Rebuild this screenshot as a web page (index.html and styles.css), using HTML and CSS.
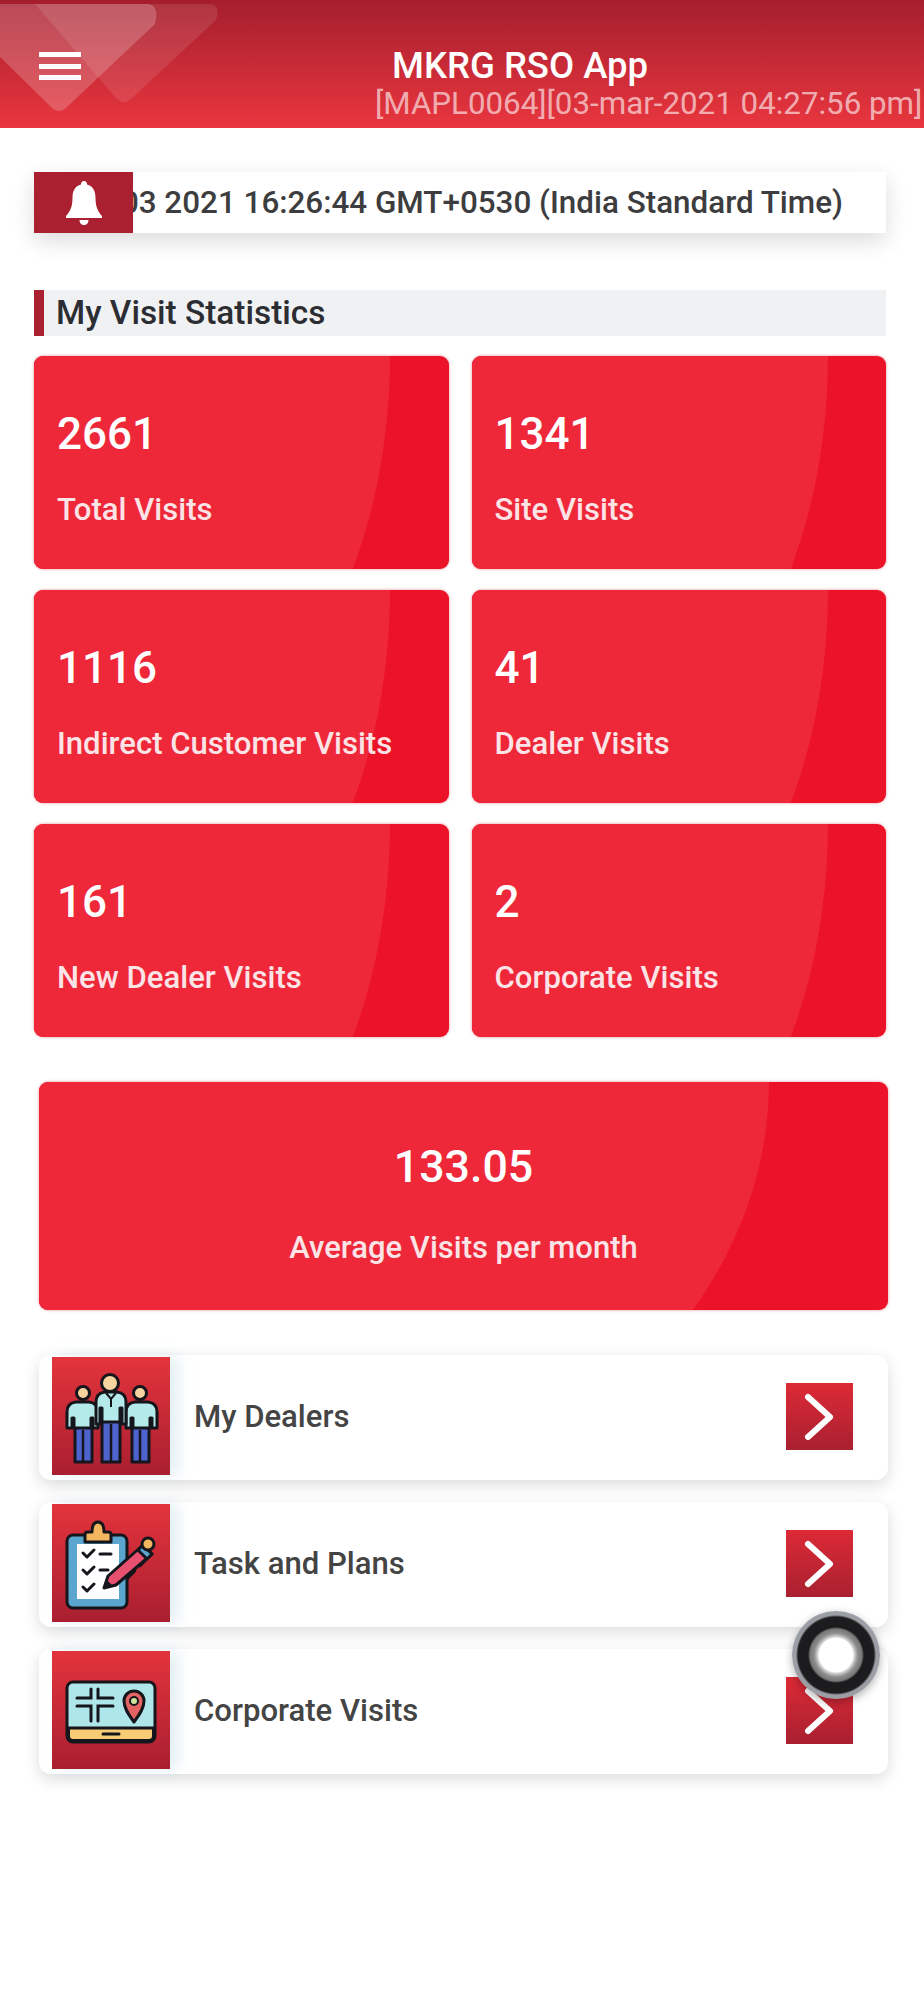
FILE: index.html
```html
<!DOCTYPE html>
<html lang="en">
<head>
  <meta charset="UTF-8">
  <meta name="viewport" content="width=device-width, initial-scale=1.0">
  <title>MKRG RSO App</title>
  <link rel="stylesheet" href="styles.css">
</head>
<body>
  <header class="topbar">
    <svg class="topbar-deco" viewBox="0 0 230 128" aria-hidden="true">
      <path d="M0 4H146Q160 4 155 24L68 106Q59 116 50 106L0 57Z" fill="#fff" fill-opacity="0.2"/>
      <path d="M35 4H208Q222 4 216 20L132 98Q124 106 116 98Z" fill="#fff" fill-opacity="0.1"/>
    </svg>
    <div class="menu-btn"><span></span><span></span><span></span></div>
    <div class="topbar-title">
      <h1>MKRG RSO App</h1>
      <p>[MAPL0064][03-mar-2021 04:27:56 pm]</p>
    </div>
  </header>

  <main class="container">
    <div class="notice">
      <div class="notice-bell">
        <svg viewBox="0 0 40 44" width="40" height="44" aria-hidden="true">
          <path d="M20 0c2 0 3 1.500 3 3.500 6 1.500 8.500 6.500 8.500 13 0 9 2 13.500 6.500 18.500v2H2v-2c4.500-5 6.500-9.500 6.500-18.500 0-6.500 2.500-11.500 8.500-13C17 1.500 18 0 20 0z" fill="#fff"/>
          <path d="M15.500 39h9c0 3-2 5-4.500 5s-4.500-2-4.500-5z" fill="#fff"/>
        </svg>
      </div>
      <div class="notice-text"><span>03 2021 16:26:44 GMT+0530 (India Standard Time)</span></div>
    </div>

    <h2 class="section-title">My Visit Statistics</h2>

    <div class="stats">
      <div class="stat"><b>2661</b><span>Total Visits</span></div>
      <div class="stat"><b>1341</b><span>Site Visits</span></div>
      <div class="stat"><b>1116</b><span>Indirect Customer Visits</span></div>
      <div class="stat"><b>41</b><span>Dealer Visits</span></div>
      <div class="stat"><b>161</b><span>New Dealer Visits</span></div>
      <div class="stat"><b>2</b><span>Corporate Visits</span></div>
    </div>

    <div class="stat stat-wide"><b>133.05</b><span>Average Visits per month</span></div>

    <div class="links">
      <div class="link-row">
        <div class="link-icon">
          <svg viewBox="0 0 118 118" width="118" height="118" aria-hidden="true">
            <g transform="translate(0 5)">
              <g stroke="#15151c" stroke-width="3" stroke-linejoin="round">
                <path d="M23 64h17v36h-17z" fill="#4f63cf"/>
                <path d="M80 64h17v36h-17z" fill="#4f63cf"/>
                <path d="M15 66V50q0-9 9-10h13q9 1 9 10v16h-5V56h-2v10H22V56h-2v10z" fill="#b5eaea"/>
                <path d="M74 66V50q0-9 9-10h13q9 1 9 10v16h-5V56h-2v10H81V56h-2v10z" fill="#b5eaea"/>
                <circle cx="31" cy="31" r="6.500" fill="#f7d3a0"/>
                <circle cx="88" cy="31" r="6.500" fill="#f7d3a0"/>
                <path d="M50 58h18v42h-18z" fill="#4f63cf"/>
                <path d="M44 62V40q0-9 9-10h12q9 1 9 10v22h-4V46h-2v14H50V46h-2v16z" fill="#b5eaea"/>
                <circle cx="58" cy="21" r="8.500" fill="#f7d3a0"/>
              </g>
              <path d="M59 62v38M31 68v31M88 68v31" stroke="#15151c" stroke-width="2.500"/>
              <path d="M54 31l5 6 5-6M59 37v8" stroke="#15151c" stroke-width="2" fill="none"/>
            </g>
          </svg>
        </div>
        <span class="link-label">My Dealers</span>
        <div class="link-go"><svg viewBox="0 0 67 67" width="67" height="67" aria-hidden="true"><path d="M22 14l22 20-22 20" fill="none" stroke="#fff" stroke-width="6" stroke-linecap="round" stroke-linejoin="round"/></svg></div>
      </div>

      <div class="link-row">
        <div class="link-icon">
          <svg viewBox="0 0 118 118" width="118" height="118" aria-hidden="true">
            <rect x="15" y="31" width="60" height="73" rx="6" fill="#5aa6cf" stroke="#15151c" stroke-width="3"/>
            <rect x="25" y="40" width="42" height="55" fill="#fff"/>
            <path d="M33 38v-8q0-2 3-2h4q0-10 6-10t6 10h4q3 0 3 2v8z" fill="#f3b65f" stroke="#15151c" stroke-width="3" stroke-linejoin="round"/>
            <path d="M31 49l4 4 7-7M31 66l4 4 7-7M31 83l4 4 7-7" fill="none" stroke="#15151c" stroke-width="3" stroke-linecap="round" stroke-linejoin="round"/>
            <path d="M48 50h11M48 66h8" stroke="#15151c" stroke-width="3" stroke-linecap="round"/>
            <path d="M52 84l4-12 35-31 9 9-36 31z" fill="#e8506f" stroke="#15151c" stroke-width="3" stroke-linejoin="round"/>
            <path d="M86 46l5-5 9 9-5 5z" fill="#5aa6cf" stroke="#15151c" stroke-width="3" stroke-linejoin="round"/>
            <circle cx="96" cy="40" r="6" fill="#f3b65f" stroke="#15151c" stroke-width="3"/>
            <path d="M52 84l3-8 5 5z" fill="#15151c"/>
            <path d="M88 62l6-6M75 75l8-8" stroke="#15151c" stroke-width="2.500" stroke-linecap="round"/>
          </svg>
        </div>
        <span class="link-label">Task and Plans</span>
        <div class="link-go"><svg viewBox="0 0 67 67" width="67" height="67" aria-hidden="true"><path d="M22 14l22 20-22 20" fill="none" stroke="#fff" stroke-width="6" stroke-linecap="round" stroke-linejoin="round"/></svg></div>
      </div>

      <div class="link-row">
        <div class="link-icon">
          <svg viewBox="0 0 118 118" width="118" height="118" aria-hidden="true">
            <rect x="15" y="31" width="88" height="60" rx="6" fill="#aee6ea" stroke="#15151c" stroke-width="3"/>
            <path d="M16.500 77h85v8q0 4.500-4.500 4.500H21q-4.500 0-4.500-4.500z" fill="#f8cb75" stroke="#15151c" stroke-width="3"/>
            <path d="M51 83h16" stroke="#15151c" stroke-width="3" stroke-linecap="round"/>
            <path d="M25 47h14V38M46 38v9h15M25 55h14v15M46 70V55h15" fill="none" stroke="#15151c" stroke-width="3" stroke-linecap="round"/>
            <path d="M82 71C76 63 72 57 72 50a10 10 0 0 1 20 0c0 7-4 13-10 21z" fill="#e36262" stroke="#15151c" stroke-width="3" stroke-linejoin="round"/>
            <circle cx="82" cy="50" r="4" fill="#cfe39a" stroke="#15151c" stroke-width="2"/>
          </svg>
        </div>
        <span class="link-label">Corporate Visits</span>
        <div class="link-go"><svg viewBox="0 0 67 67" width="67" height="67" aria-hidden="true"><path d="M22 14l22 20-22 20" fill="none" stroke="#fff" stroke-width="6" stroke-linecap="round" stroke-linejoin="round"/></svg></div>
      </div>
    </div>
  </main>

  <div class="float-ball"></div>
</body>
</html>
```

FILE: styles.css
```css
* {
  box-sizing: border-box;
}
body {
  font-family: Roboto, "Liberation Sans", sans-serif;
  background: #fff;
  margin: 0;
  color: #333;
  position: relative;
  min-height: 2000px;
}
.topbar {
  height: 128px;
  background: linear-gradient(to bottom, #a51e2d, #e9363f);
  position: relative;
  overflow: hidden;
  display: flex;
  align-items: flex-start;
}
.topbar-deco {
  position: absolute;
  left: 0;
  top: 0;
  width: 230px;
  height: 128px;
}
.menu-btn {
  position: relative;
  width: 42px;
  margin: 52px 0 0 39px;
  display: flex;
  flex-direction: column;
  gap: 6.5px;
}
.menu-btn span {
  height: 5px;
  background: #fff;
}
.topbar-title {
  position: relative;
  margin-left: auto;
  width: 549px;
  color: #fff;
}
.topbar-title h1 {
  margin: 46px 0 0 17px;
  font-size: 36.5px;
  line-height: 40px;
  font-weight: 500;
}
.topbar-title p {
  margin: 1px 0 0;
  font-size: 31.3px;
  line-height: 34px;
  white-space: nowrap;
  color: rgba(255, 255, 255, 0.62);
}
.container {
  padding: 44px 38px 0 34px;
}
.notice {
  height: 61px;
  background: #fff;
  display: flex;
  box-shadow: 0 8px 22px rgba(0, 0, 0, 0.14);
}
.notice-bell {
  width: 99px;
  flex-shrink: 0;
  background: #ab2030;
  display: flex;
  align-items: center;
  justify-content: center;
}
.notice-text {
  flex: 1;
  min-width: 0;
  overflow: hidden;
  display: flex;
  justify-content: flex-end;
  align-items: center;
  padding-right: 43px;
  font-size: 31.4px;
  font-weight: 500;
  white-space: nowrap;
  color: #3d3d40;
}
.notice-text span {
  flex-shrink: 0;
}
.section-title {
  height: 46px;
  margin: 57px 0 20px;
  padding-left: 12px;
  background: #f0f1f3;
  border-left: 10px solid #ab2030;
  font-size: 33.4px;
  line-height: 46px;
  font-weight: 500;
  color: #2c2d33;
}
.stats {
  display: grid;
  grid-template-columns: 1fr 1fr;
  gap: 21px 23px;
}
.stat {
  position: relative;
  overflow: hidden;
  height: 213px;
  background: #ec1329;
  border-radius: 9px;
  padding: 54px 23px 0;
  color: #fff;
  box-shadow: 0 0 3px rgba(200, 20, 40, 0.5);
}
.stat::before {
  content: "";
  position: absolute;
  left: 0;
  top: 0;
  width: 86%;
  height: 200%;
  background: #ee2739;
  border-bottom-right-radius: 78% 100%;
}
.stat b,
.stat span {
  position: relative;
  display: block;
  white-space: nowrap;
}
.stat b {
  font-size: 44px;
  line-height: 48px;
  font-weight: 500;
}
.stat span {
  margin-top: 35px;
  font-size: 31.1px;
  line-height: 34px;
  font-weight: 500;
  color: #fbe3e6;
}
.stat-wide {
  height: 228px;
  margin: 45px -2px 0 5px;
  padding-top: 61px;
  text-align: center;
}
.stat-wide b {
  font-size: 44.7px;
}
.stat-wide span {
  margin-top: 40px;
  font-size: 31px;
}
.links {
  margin: 45px -2px 0 5px;
  display: flex;
  flex-direction: column;
  gap: 22px;
}
.link-row {
  height: 125px;
  background: #fff;
  border-radius: 12px;
  padding-left: 13px;
  display: flex;
  align-items: center;
  box-shadow: 0 5px 16px rgba(0, 0, 0, 0.14);
}
.link-icon {
  width: 118px;
  height: 118px;
  margin-bottom: 3px;
  flex-shrink: 0;
  background: linear-gradient(to bottom, #e3343c, #a91f30);
  box-shadow: 8px 0 14px rgba(170, 205, 220, 0.35);
}
.link-icon svg {
  display: block;
}
.link-label {
  margin: 0 0 2px 24px;
  font-size: 31.1px;
  font-weight: 500;
  color: #444;
}
.link-go {
  width: 67px;
  height: 67px;
  margin: 0 35px 2px auto;
  background: linear-gradient(to bottom, #dc2a36, #a92030);
}
.link-go svg {
  display: block;
}
.float-ball {
  position: absolute;
  left: 792px;
  top: 1611px;
  width: 88px;
  height: 88px;
  border-radius: 50%;
  background: radial-gradient(circle, #fff 0 17px, #d8d8d8 18px, #8d8d8d 22px, #777 26px, #1b1b1d 28px, #1d1d1f 38px, #9b9ea4 40px);
  box-shadow: 0 3px 8px rgba(0, 0, 0, 0.3);
}
```
